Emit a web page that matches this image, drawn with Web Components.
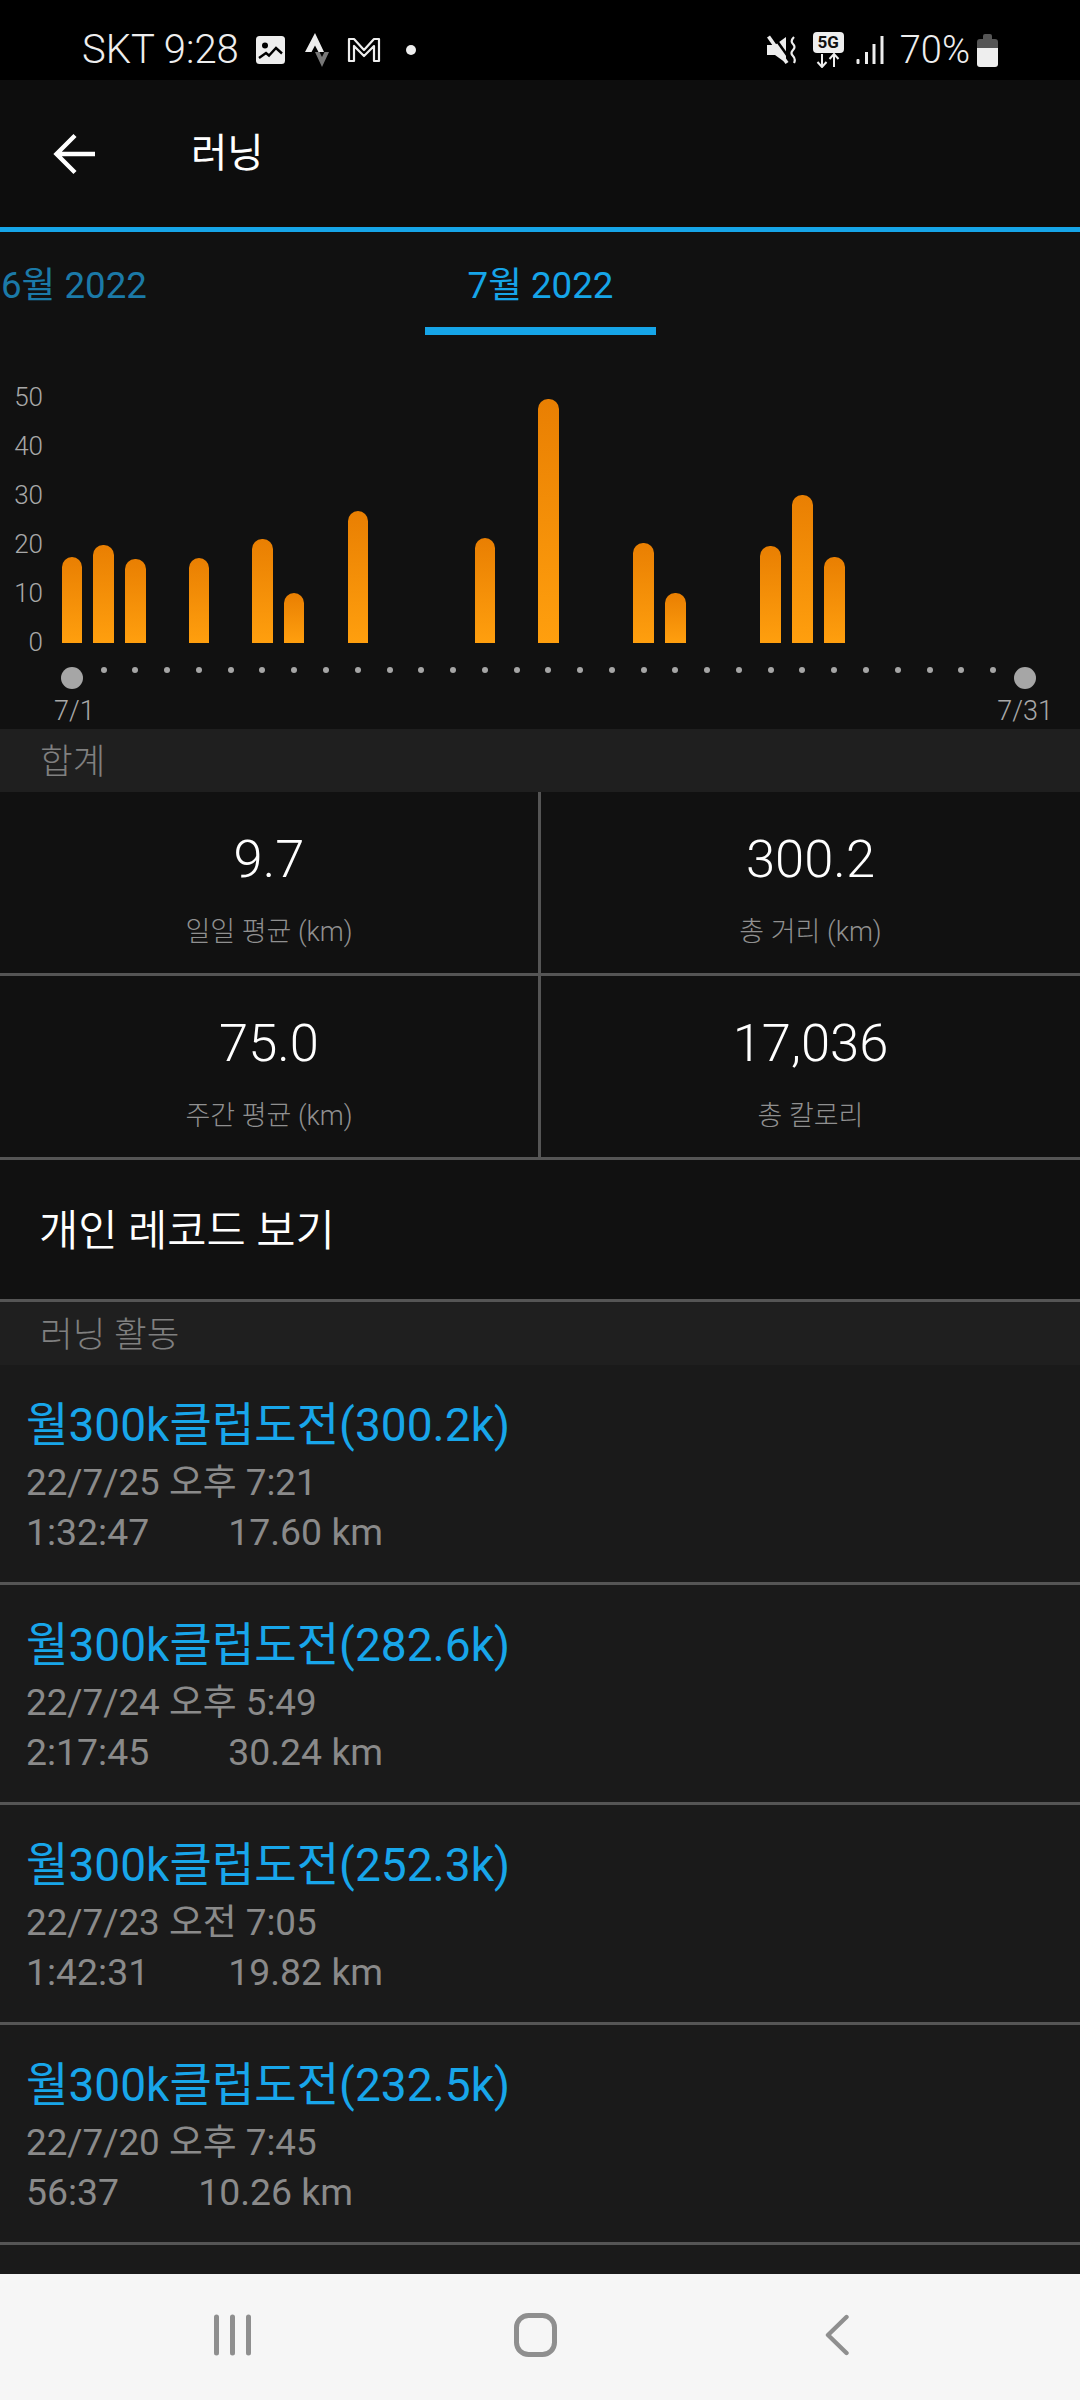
<!DOCTYPE html>
<html lang="ko">
<head>
<meta charset="utf-8">
<title>러닝</title>
<style>
  html, body { margin: 0; padding: 0; background: #111; }
  body {
    width: 1080px;
    height: 2400px;
    overflow: hidden;
    display: flex;
    flex-direction: column;
    font-family: Roboto, "Noto Sans CJK KR", sans-serif;
  }
  #content { flex: 1; min-height: 0; overflow: hidden; background: #1a1a1a; }
</style>
</head>
<body>
  <status-bar></status-bar>
  <app-bar>러닝</app-bar>
  <month-tabs prev="6월 2022" current="7월 2022"></month-tabs>
  <run-chart></run-chart>
  <div id="content">
    <section-head>합계</section-head>
    <stat-grid>
      <stat-cell value="9.7">일일 평균 (km)</stat-cell>
      <stat-cell value="300.2">총 거리 (km)</stat-cell>
      <stat-cell value="75.0">주간 평균 (km)</stat-cell>
      <stat-cell value="17,036">총 칼로리</stat-cell>
    </stat-grid>
    <link-row>개인 레코드 보기</link-row>
    <section-head>러닝 활동</section-head>
    <activity-row name="월300k클럽도전(300.2k)" date="22/7/25 오후 7:21" time="1:32:47" dist="17.60 km"></activity-row>
    <activity-row name="월300k클럽도전(282.6k)" date="22/7/24 오후 5:49" time="2:17:45" dist="30.24 km"></activity-row>
    <activity-row name="월300k클럽도전(252.3k)" date="22/7/23 오전 7:05" time="1:42:31" dist="19.82 km"></activity-row>
    <activity-row name="월300k클럽도전(232.5k)" date="22/7/20 오후 7:45" time="56:37" dist="10.26 km"></activity-row>
  </div>
  <nav-bar></nav-bar>

<script>
const statusBarTemplate = document.createElement("template");
statusBarTemplate.innerHTML = `
  <style>
    :host {
      display: flex;
      align-items: center;
      flex: none;
      box-sizing: border-box;
      height: 80px;
      padding: 20px 82px 0;
      background: #000;
      color: #eee;
      font-size: 38px;
      line-height: 1;
    }
    svg { display: block; flex: none; }
    .carrier { font-size: 40px; font-weight: 300; }
    .right { margin-left: auto; display: flex; align-items: center; }
    .five-g { display: flex; flex-direction: column; align-items: center; width: 31px; }
    .five-g b {
      display: block;
      width: 31px;
      height: 21px;
      border-radius: 4px;
      background: #eee;
      color: #111;
      font-size: 17px;
      line-height: 21px;
      text-align: center;
      font-weight: 700;
    }
  </style>
  <span class="carrier">SKT 9:28</span>
  <svg style="margin-left:17px" width="29" height="28" viewBox="0 0 29 28">
    <rect width="29" height="28" rx="3.5" fill="#eee"/>
    <circle cx="9" cy="9.5" r="3" fill="#000"/>
    <path d="M3 22 L10 17 L13 19.5 L20 12 L26 17.5" fill="none" stroke="#000" stroke-width="2.4"/>
  </svg>
  <svg style="margin-left:20px" width="24" height="34" viewBox="0 0 24 34">
    <path d="M10 0 L19 19 H13.5 L10 12.5 L6.5 19 H0 Z" fill="#eee"/>
    <path d="M10 19 H14.5 L17 24 L19.5 19 H24 L17 34 Z" fill="#777"/>
  </svg>
  <svg style="margin-left:18px" width="34" height="26" viewBox="0 0 34 26">
    <path d="M2 2 H7 L17 13 L27 2 H32 V24 H27 V9 L17 19 L7 9 V24 H2 Z" fill="none" stroke="#eee" stroke-width="2.2" stroke-linejoin="round"/>
  </svg>
  <svg style="margin-left:25px" width="10" height="10" viewBox="0 0 10 10"><circle cx="5" cy="5" r="5" fill="#eee"/></svg>
  <div class="right">
    <svg width="30" height="30" viewBox="0 0 30 30">
      <path d="M0 10 H8 L19 2 V28 L8 20 H0 Z" fill="#eee"/>
      <path d="M5 -1 L25 27" stroke="#000" stroke-width="2.6"/>
      <path d="M1.5 1.5 L20 28" stroke="#eee" stroke-width="3.6"/>
      <path d="M27 2 Q23 6 26 9 Q29 12 26 15 Q23 18 26 21 Q29 24 27 28" fill="none" stroke="#eee" stroke-width="2.2"/>
    </svg>
    <div class="five-g" style="margin-left:16px">
      <b>5G</b>
      <svg width="24" height="15" viewBox="0 0 24 15">
        <path d="M6 1 V13 M1.5 9 L6 14 L10.5 9" fill="none" stroke="#eee" stroke-width="2"/>
        <path d="M18 14 V2 M13.5 6 L18 1 L22.5 6" fill="none" stroke="#eee" stroke-width="2"/>
      </svg>
    </div>
    <svg style="margin-left:12px" width="28" height="28" viewBox="0 0 28 28">
      <rect x="0.5" y="23" width="3" height="5" rx="1" fill="#eee"/>
      <rect x="9" y="16" width="3" height="12" fill="#eee"/>
      <rect x="16.5" y="8" width="3" height="20" fill="#eee"/>
      <rect x="24.5" y="0" width="3" height="28" fill="#eee"/>
    </svg>
    <span style="margin-left:16px;font-weight:300">70%</span>
    <svg style="margin-left:7px" width="21" height="33" viewBox="0 0 21 33">
      <path d="M6 2 a2 2 0 0 1 2 -2 h5 a2 2 0 0 1 2 2 v3 h3 a3 3 0 0 1 3 3 v6 H0 V8 a3 3 0 0 1 3 -3 h3 Z" fill="#555"/>
      <path d="M0 14 H21 V30 a3 3 0 0 1 -3 3 H3 a3 3 0 0 1 -3 -3 Z" fill="#eee"/>
    </svg>
  </div>
`;

class StatusBar extends HTMLElement {
  constructor() {
    super();
    this.attachShadow({ mode: "open" });
    this.shadowRoot.appendChild(statusBarTemplate.content.cloneNode(true));
  }
}
customElements.define("status-bar", StatusBar);

const appBarTemplate = document.createElement("template");
appBarTemplate.innerHTML = `
  <style>
    :host {
      display: flex;
      align-items: center;
      flex: none;
      box-sizing: border-box;
      height: 152px;
      padding: 0 0 0 53px;
      background: #0d0d0d;
      border-bottom: 5px solid #16a5e8;
      color: #fff;
      font-size: 39.5px;
      line-height: 44px;
    }
    svg { display: block; margin-right: 96px; }
    span { margin-top: 1px; }
  </style>
  <svg width="42" height="42" viewBox="0 0 42 42">
    <path d="M42 21 H4 M22 2.5 L3.5 21 L22 39.5" fill="none" stroke="#fff" stroke-width="4.4"/>
  </svg>
  <span><slot></slot></span>
`;

class AppBar extends HTMLElement {
  constructor() {
    super();
    this.attachShadow({ mode: "open" });
    this.shadowRoot.appendChild(appBarTemplate.content.cloneNode(true));
  }
}
customElements.define("app-bar", AppBar);

const monthTabsTemplate = document.createElement("template");
monthTabsTemplate.innerHTML = `
  <style>
    :host {
      display: grid;
      grid-template-columns: 425px 231px 1fr;
      flex: none;
      height: 103px;
      background: #111;
      font-size: 36.7px;
      line-height: 108px;
    }
    div { box-sizing: border-box; height: 103px; }
    .prev { color: #1b7aa8; padding-left: 1px; }
    .current { color: #16a5e8; text-align: center; border-bottom: 8px solid #16a5e8; }
  </style>
  <div id="prev" class="prev"></div>
  <div id="current" class="current"></div>
`;

class MonthTabs extends HTMLElement {
  constructor() {
    super();
    this.attachShadow({ mode: "open" });
    this.shadowRoot.appendChild(monthTabsTemplate.content.cloneNode(true));
    this.shadowRoot.getElementById("prev").textContent = this.getAttribute("prev") ?? "";
    this.shadowRoot.getElementById("current").textContent = this.getAttribute("current") ?? "";
  }
}
customElements.define("month-tabs", MonthTabs);

// bar heights in px, by day of the month (index 0 = 7/1)
const dayBars = { 0: 86, 1: 98, 2: 84, 4: 85, 6: 104, 7: 50, 9: 132, 13: 105, 15: 244, 18: 100, 19: 50, 22: 97, 23: 148, 24: 86 };

const runChartTemplate = document.createElement("template");
runChartTemplate.innerHTML = `
  <style>
    :host {
      display: block;
      flex: none;
      box-sizing: border-box;
      height: 394px;
      padding-top: 37px;
      background: #111;
      color: #a8a8a8;
      font-size: 26px;
      font-weight: 300;
    }
    .top { display: flex; height: 317px; }
    .axis { width: 43px; flex: none; text-align: right; padding-top: 1px; }
    .axis div { height: 49px; line-height: 49px; }
    .plot { margin-left: 13px; margin-top: -1px; }
    .bars, .dots { display: grid; grid-template-columns: repeat(31, 31.77px); }
    .bars { height: 272px; align-items: end; justify-items: center; }
    .bar {
      width: 20.5px;
      border-radius: 10px 10px 0 0;
      background: linear-gradient(#e97f02, #ff9f0e);
    }
    .dots { height: 46px; justify-items: center; }
    .dot { width: 6px; height: 6px; margin-top: 24px; border-radius: 50%; background: #a6a6a6; }
    .dot.end { width: 22px; height: 22px; margin-top: 24px; }
    .labels {
      display: flex;
      justify-content: space-between;
      margin-top: 7px;
      padding: 0 27px 0 54px;
      height: 30px;
      font-size: 27px;
      line-height: 30px;
    }
  </style>
  <div class="top">
    <div class="axis"><div>50</div><div>40</div><div>30</div><div>20</div><div>10</div><div>0</div></div>
    <div class="plot">
      <div class="bars" id="bars"></div>
      <div class="dots" id="dots"></div>
    </div>
  </div>
  <div class="labels"><span>7/1</span><span>7/31</span></div>
`;

class RunChart extends HTMLElement {
  constructor() {
    super();
    this.attachShadow({ mode: "open" });
    this.shadowRoot.appendChild(runChartTemplate.content.cloneNode(true));
    const bars = this.shadowRoot.getElementById("bars");
    const dots = this.shadowRoot.getElementById("dots");
    for (let day = 0; day < 31; day++) {
      const bar = document.createElement("div");
      if (dayBars[day]) {
        bar.className = "bar";
        bar.style.height = dayBars[day] + "px";
      }
      bars.appendChild(bar);
      const dot = document.createElement("div");
      dot.className = day === 0 || day === 30 ? "dot end" : "dot";
      dots.appendChild(dot);
    }
  }
}
customElements.define("run-chart", RunChart);

const sectionHeadTemplate = document.createElement("template");
sectionHeadTemplate.innerHTML = `
  <style>
    :host {
      display: block;
      box-sizing: border-box;
      height: 63px;
      padding-left: 40px;
      background: #1f1f1f;
      color: #808080;
      font-size: 35.5px;
      font-weight: 300;
      line-height: 67px;
    }
  </style>
  <slot></slot>
`;

class SectionHead extends HTMLElement {
  constructor() {
    super();
    this.attachShadow({ mode: "open" });
    this.shadowRoot.appendChild(sectionHeadTemplate.content.cloneNode(true));
  }
}
customElements.define("section-head", SectionHead);

const statGridTemplate = document.createElement("template");
statGridTemplate.innerHTML = `
  <style>
    :host {
      display: grid;
      grid-template-columns: 538px 542px;
      background: #111;
    }
  </style>
  <slot></slot>
`;

class StatGrid extends HTMLElement {
  constructor() {
    super();
    this.attachShadow({ mode: "open" });
    this.shadowRoot.appendChild(statGridTemplate.content.cloneNode(true));
  }
}
customElements.define("stat-grid", StatGrid);

const statCellTemplate = document.createElement("template");
statCellTemplate.innerHTML = `
  <style>
    :host {
      display: flex;
      flex-direction: column;
      align-items: center;
      box-sizing: border-box;
      height: 184px;
      border-bottom: 3px solid #555;
      background: #111;
    }
    :host(:nth-child(even)) { border-left: 3px solid #555; }
    .value {
      margin-top: 37px;
      height: 60px;
      line-height: 60px;
      color: #fff;
      font-size: 52.5px;
      font-weight: 300;
    }
    .label {
      margin-top: 23px;
      line-height: 40px;
      color: #909090;
      font-size: 27px;
      font-weight: 300;
    }
  </style>
  <div class="value" id="value"></div>
  <div class="label"><slot></slot></div>
`;

class StatCell extends HTMLElement {
  constructor() {
    super();
    this.attachShadow({ mode: "open" });
    this.shadowRoot.appendChild(statCellTemplate.content.cloneNode(true));
    this.shadowRoot.getElementById("value").textContent = this.getAttribute("value") ?? "";
  }
}
customElements.define("stat-cell", StatCell);

const linkRowTemplate = document.createElement("template");
linkRowTemplate.innerHTML = `
  <style>
    :host {
      display: block;
      box-sizing: border-box;
      height: 142px;
      padding-left: 39px;
      border-bottom: 3px solid #555;
      background: #111;
      color: #fff;
      font-size: 42.7px;
      font-weight: 350;
      line-height: 143px;
    }
  </style>
  <slot></slot>
`;

class LinkRow extends HTMLElement {
  constructor() {
    super();
    this.attachShadow({ mode: "open" });
    this.shadowRoot.appendChild(linkRowTemplate.content.cloneNode(true));
  }
}
customElements.define("link-row", LinkRow);

const activityRowTemplate = document.createElement("template");
activityRowTemplate.innerHTML = `
  <style>
    :host {
      display: block;
      box-sizing: border-box;
      height: 220px;
      padding: 31px 0 0 26px;
      border-bottom: 3px solid #555;
      background: #1a1a1a;
    }
    .name { height: 58px; line-height: 58px; color: #18a6ea; font-size: 46.1px; }
    .line { line-height: 51px; color: #8a8a8a; font-size: 37.4px; }
    .date { height: 50px; margin-top: 3px; font-size: 36.8px; }
    .stats { display: flex; gap: 79px; }
  </style>
  <div class="name" id="name"></div>
  <div class="line date" id="date"></div>
  <div class="line stats"><span id="time"></span><span id="dist"></span></div>
`;

class ActivityRow extends HTMLElement {
  constructor() {
    super();
    this.attachShadow({ mode: "open" });
    this.shadowRoot.appendChild(activityRowTemplate.content.cloneNode(true));
    for (const key of ["name", "date", "time", "dist"]) {
      this.shadowRoot.getElementById(key).textContent = this.getAttribute(key) ?? "";
    }
  }
}
customElements.define("activity-row", ActivityRow);

const navBarTemplate = document.createElement("template");
navBarTemplate.innerHTML = `
  <style>
    :host {
      display: flex;
      align-items: center;
      flex: none;
      box-sizing: border-box;
      height: 126px;
      padding: 0 231px 4px 214px;
      justify-content: space-between;
      background: #f6f6f6;
    }
    svg { display: block; }
    .home { margin-right: 6px; }
  </style>
  <svg width="38" height="42" viewBox="0 0 38 42">
    <path d="M2.5 3 V39 M18.5 3 V39 M34.5 3 V39" stroke="#8f8f8f" stroke-width="5" stroke-linecap="round"/>
  </svg>
  <svg class="home" width="43" height="44" viewBox="0 0 43 44">
    <rect x="2.5" y="2.5" width="38" height="39" rx="12" fill="none" stroke="#8f8f8f" stroke-width="5"/>
  </svg>
  <svg width="24" height="42" viewBox="0 0 24 42">
    <path d="M21.5 3 L3 21 L21.5 39" fill="none" stroke="#8f8f8f" stroke-width="4.4" stroke-linecap="round" stroke-linejoin="round"/>
  </svg>
`;

class NavBar extends HTMLElement {
  constructor() {
    super();
    this.attachShadow({ mode: "open" });
    this.shadowRoot.appendChild(navBarTemplate.content.cloneNode(true));
  }
}
customElements.define("nav-bar", NavBar);
</script>
</body>
</html>
